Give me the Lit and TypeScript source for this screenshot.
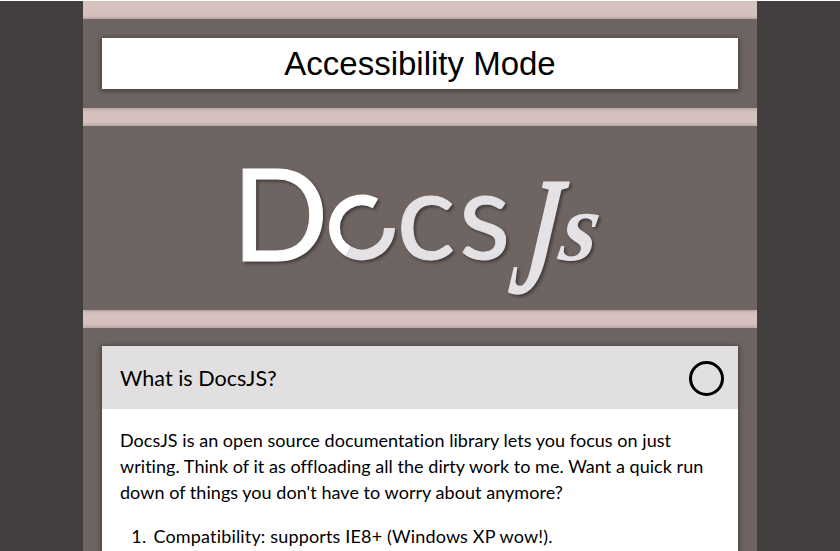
import { LitElement, html, css } from "lit";
import { customElement } from "lit/decorators.js";

@customElement("docs-logo")
class DocsLogo extends LitElement {
  static styles = css`
    :host { display: block; height: 184px; }
    svg { display: block; width: 100%; height: 100%; overflow: visible; filter: drop-shadow(2px 2px 1.5px rgba(30, 25, 25, 0.55)); }
    text { font-family: Lato, sans-serif; font-size: 129px; fill: #e4e2e4; stroke: #e4e2e4; stroke-width: 1px; }
    .bright { fill: #fff; stroke: #fff; }
    .script { font-family: "Liberation Serif", serif; font-style: italic; font-weight: 700; stroke: none; }
    .ring { fill: none; stroke: #e4e2e4; stroke-width: 11; }
    .arc { fill: none; stroke: #fff; stroke-width: 11; }
  `;
  render() {
    return html`
      <svg viewBox="83 126 674 184" role="img" aria-label="DocsJs">
        <text class="bright" transform="translate(231.5 260.8) scale(.99 .995)">D</text>
        <path class="ring" d="M389.5 228 A27.5 27.5 0 0 1 348.5 251.4" />
        <path class="arc" d="M348.5 251.4 A27.5 27.5 0 0 1 334.5 227.5 A27.5 27.5 0 0 1 375.5 203.5" />
        <text transform="translate(396.5 259) scale(.96 .95)">c</text>
        <text transform="translate(459 259) scale(.92 .95)">s</text>
        <text class="script" transform="translate(508 293) skewX(-8) scale(.68 1.32)">J</text>
        <text class="script" transform="translate(557 259.5) skewX(-10) scale(.74 .76)">s</text>
      </svg>
    `;
  }
}

@customElement("app-root")
class AppRoot extends LitElement {
  static styles = css`
    :host {
      display: flex;
      justify-content: center;
      box-sizing: border-box;
      height: 551px;
      overflow: hidden;
      border-top: 1px solid #fff;
      background: #433f3e;
      color: #000;
      font-family: Lato, sans-serif;
    }
    .page {
      display: flex;
      flex-direction: column;
      gap: 18px;
      box-sizing: border-box;
      width: 674px;
      height: 700px;
      padding-top: 18px;
      background: #d5c1bd;
    }
    .band { background: #6e6562; box-shadow: 0 0 4px rgba(70, 60, 58, 0.45); clip-path: inset(-30px 0); }
    .padded { padding: 19px; }
    .mode {
      display: block;
      width: 100%;
      height: 51px;
      padding: 0;
      border: 0;
      background: #fff;
      color: #000;
      font: 33px/51px "Liberation Sans", sans-serif;
      box-shadow: 0 1px 5px 1px rgba(35, 30, 28, 0.55);
    }
    .content { flex: 1; padding: 18px 19px; }
    .card { height: 400px; background: #fff; box-shadow: 0 1px 5px 1px rgba(35, 30, 28, 0.55); }
    .head {
      display: flex;
      align-items: center;
      justify-content: space-between;
      height: 63px;
      box-sizing: border-box;
      padding: 2px 14px 0 18px;
      background: #e1dfe0;
    }
    h2 { margin: 0 0 2px; font-size: 21.6px; font-weight: 400; line-height: 28px; }
    .toggle { box-sizing: border-box; width: 35px; height: 35px; border: 3px solid #000; border-radius: 50%; }
    .body { padding: 18px; font-size: 18px; line-height: 26px; letter-spacing: 0.04px; font-variant-ligatures: no-common-ligatures; }
    p { margin: 0; white-space: nowrap; }
    ol { margin: 18px 0 0; padding-left: 33.5px; letter-spacing: 0.16px; }
    li::marker { content: "1.\\00a0\\2009"; }
  `;
  render() {
    return html`
      <main class="page">
        <section class="band padded"><button class="mode">Accessibility Mode</button></section>
        <section class="band"><docs-logo></docs-logo></section>
        <section class="band content">
          <article class="card">
            <header class="head"><h2>What is DocsJS?</h2><span class="toggle"></span></header>
            <div class="body">
              <p>DocsJS is an open source documentation library lets you focus on just<br />writing. Think of it as offloading all the dirty work to me. Want a quick run<br />down of things you don't have to worry about anymore?</p>
              <ol><li>Compatibility: supports IE8+ (Windows XP wow!).</li></ol>
            </div>
          </article>
        </section>
      </main>
    `;
  }
}
